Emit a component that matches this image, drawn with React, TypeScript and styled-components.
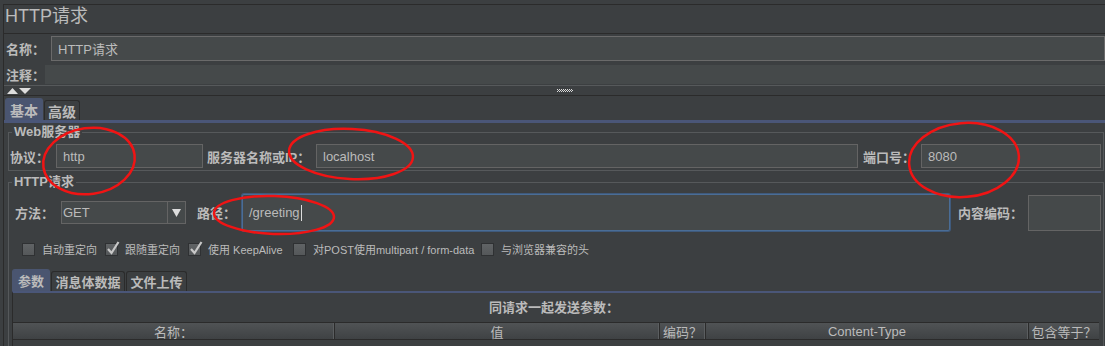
import React from "react";
import styled, { createGlobalStyle } from "styled-components";

const C = {
  bg: "#3c3f41",
  dark: "#2b2b2b",
  field: "#45494a",
  fieldBorder: "#646464",
  text: "#bbbbbb",
  tab: "#4a5570",
  blue: "#4a5678",
  focus: "#4a6d96",
  etch: "#56595b",
};

const GlobalStyle = createGlobalStyle`
  html, body { margin: 0; padding: 0; background: ${C.bg}; }
  body {
    font-family: "Liberation Sans", "Noto Sans CJK SC", sans-serif;
    color: ${C.text};
  }
  * { box-sizing: border-box; }
`;

const Root = styled.div`
  position: relative;
  width: 1105px;
  height: 346px;
  overflow: hidden;
  padding: 4px 0 0 3px;
  background: ${C.bg};
`;

const Frame = styled.div`
  border-top: 1px solid ${C.dark};
  border-left: 1px solid ${C.dark};
  height: 100%;
`;

const Title = styled.div`
  height: 28px;
  line-height: 22px;
  font-size: 18px;
  padding-left: 1px;
  white-space: nowrap;
`;

const NamePanel = styled.div`
  border-top: 1px solid ${C.dark};
  border-bottom: 1px solid ${C.etch};
  padding: 2px 0 1px 0;
  display: flex;
  flex-direction: column;
  gap: 4px;
`;

const Row = styled.div<{ $h: number }>`
  display: flex;
  align-items: center;
  height: ${(p) => p.$h}px;
`;

const Label = styled.div<{ $w: number; $pl?: number }>`
  flex: 0 0 ${(p) => p.$w}px;
  padding-left: ${(p) => p.$pl ?? 2}px;
  font-size: 13px;
  font-weight: 700;
  white-space: nowrap;
  overflow: hidden;
`;

const Field = styled.div<{ $w?: number; $h: number; $border?: string; $focus?: boolean }>`
  ${(p) => (p.$w ? `flex: 0 0 ${p.$w}px;` : "flex: 1 1 auto;")}
  height: ${(p) => p.$h}px;
  background: ${C.field};
  border: 1px solid ${(p) => (p.$focus ? C.focus : p.$border ?? C.fieldBorder)};
  ${(p) => (p.$focus ? "border-radius: 2px; box-shadow: 0 0 0 1px #3f5a7c;" : "")}
  font-size: 13px;
  padding-left: 6px;
  display: flex;
  align-items: center;
  white-space: nowrap;
  min-width: 0;
`;

const Caret = styled.span`
  display: inline-block;
  width: 1px;
  height: 16px;
  background: #dddddd;
  margin-left: 1px;
`;

const Splitter = styled.div`
  height: 10px;
  border-bottom: 1px solid ${C.dark};
  display: flex;
  align-items: center;
  padding-left: 3px;
  position: relative;
`;

const Grip = styled.svg`
  position: absolute;
  left: 553px;
  top: 3px;
`;

const TabBar = styled.div<{ $pl: number }>`
  display: flex;
  align-items: flex-end;
  height: 24px;
  padding-left: ${(p) => p.$pl}px;
`;

const Tab = styled.div<{ $active?: boolean; $w: number; $fs: number }>`
  flex: 0 0 ${(p) => p.$w}px;
  height: ${(p) => (p.$active ? 22 : 20)}px;
  background: ${(p) => (p.$active ? C.tab : C.bg)};
  border: 1px solid ${(p) => (p.$active ? C.tab : C.dark)};
  border-bottom: none;
  border-radius: 3px 3px 0 0;
  font-size: ${(p) => p.$fs}px;
  font-weight: 700;
  display: flex;
  align-items: center;
  justify-content: center;
  white-space: nowrap;
  margin-right: 1px;
`;

const TabBody = styled.div`
  border-top: 3px solid ${C.blue};
  padding-top: 2px;
`;

const Group = styled.fieldset<{ $mt: number }>`
  margin: ${(p) => p.$mt}px 1px 0 4px;
  padding: 5px 2px 2px 0;
  border: 1px solid ${C.etch};
  min-width: 0;
`;

const Legend = styled.legend`
  font-size: 13px;
  font-weight: 700;
  line-height: 14px;
  padding: 0 2px;
  margin-left: 3px;
  white-space: nowrap;
`;

const Combo = styled.div`
  flex: 0 0 125px;
  height: 23px;
  background: ${C.field};
  border: 1px solid ${C.fieldBorder};
  display: flex;
  font-size: 13px;
`;

const ComboText = styled.div`
  flex: 1;
  padding-left: 1px;
  display: flex;
  align-items: center;
`;

const ComboArrow = styled.div`
  flex: 0 0 18px;
  border-left: 1px solid ${C.fieldBorder};
  display: flex;
  align-items: center;
  justify-content: center;
`;

const Checks = styled.div`
  display: flex;
  align-items: center;
  height: 14px;
  margin-top: 11px;
  padding-left: 13px;
`;

const CheckItem = styled.div<{ $w?: number }>`
  ${(p) => (p.$w ? `flex: 0 0 ${p.$w}px;` : "")}
  display: flex;
  align-items: center;
  gap: 7px;
  font-size: 11px;
  white-space: nowrap;
`;

const Box = styled.div`
  position: relative;
  width: 13px;
  height: 13px;
  background: linear-gradient(#606365, #55585a);
  border: 1px solid #2f3133;
`;

const Tick = styled.svg`
  position: absolute;
  left: -1px;
  top: -4px;
`;

const SubTabs = styled(TabBar)`
  margin-top: 13px;
  height: 22px;
`;

const SubPanel = styled.div`
  margin: 0 0 0 3px;
  border-top: 2px solid ${C.blue};
  border-left: 1px solid ${C.dark};
  height: 60px;
`;

const PanelTitle = styled.div`
  height: 29px;
  padding-top: 8px;
  line-height: 14px;
  font-size: 13px;
  font-weight: 700;
  text-align: center;
  padding-right: 6px;
`;

const Header = styled.div`
  display: flex;
  height: 18px;
  border-top: 1px solid ${C.dark};
  border-bottom: 1px solid ${C.dark};
  background: linear-gradient(#505355, #3f4244);
  width: 1086px;
`;

const HeadCell = styled.div<{ $w: number; $last?: boolean }>`
  flex: 0 0 ${(p) => p.$w}px;
  border-right: ${(p) => (p.$last ? "none" : `1px solid ${C.dark}`)};
  box-shadow: ${(p) => (p.$last ? "none" : "inset -1px 0 0 #5b5e60")};
  font-size: 13px;
  display: flex;
  align-items: center;
  justify-content: center;
  white-space: nowrap;
`;

const Notes = styled.svg`
  position: absolute;
  left: 0;
  top: 0;
  pointer-events: none;
`;

const Check = ({ label, checked, w }: { label: string; checked?: boolean; w?: number }) => (
  <CheckItem $w={w}>
    <Box>
      {checked && (
        <Tick width="16" height="16" viewBox="0 0 16 16">
          <path d="M3 9 L6.5 13 L13.5 2" stroke="#c8c8c8" strokeWidth="2.2" fill="none" />
        </Tick>
      )}
    </Box>
    <span>{label}</span>
  </CheckItem>
);

export default function App() {
  return (
    <>
      <GlobalStyle />
      <Root>
        <Frame>
          <Title>HTTP请求</Title>
          <NamePanel>
            <Row $h={25}>
              <Label $w={47}>名称：</Label>
              <Field $h={25} $border="#6a6a6a">HTTP请求</Field>
            </Row>
            <Row $h={19}>
              <Label $w={41}>注释：</Label>
              <Field $h={19} $border={C.field} />
            </Row>
          </NamePanel>
          <Splitter>
            <svg width="26" height="6" viewBox="0 0 26 6">
              <polygon points="0,6 5.5,0 11,6" fill="#dddddd" />
              <polygon points="12,0 24,0 18,6" fill="#dddddd" />
            </svg>
            <Grip width="18" height="4" viewBox="0 0 18 4">
              {[0, 4, 8, 12].map((x) => (
                <g key={x} fill="#d8d8d8">
                  <rect x={x} y={0} width="1" height="1" />
                  <rect x={x + 2} y={0} width="1" height="1" />
                  <rect x={x + 1} y={1} width="1" height="1" />
                  <rect x={x + 3} y={1} width="1" height="1" />
                  <rect x={x} y={2} width="1" height="1" />
                  <rect x={x + 2} y={2} width="1" height="1" />
                </g>
              ))}
            </Grip>
          </Splitter>
          <TabBar $pl={1}>
            <Tab $active $w={38} $fs={14}>基本</Tab>
            <Tab $w={36} $fs={14}>高级</Tab>
          </TabBar>
          <TabBody>
            <Group $mt={0}>
              <Legend>Web服务器</Legend>
              <Row $h={24}>
                <Label $w={47} $pl={1}>协议：</Label>
                <Field $w={147} $h={24}>http</Field>
                <Label $w={113} $pl={4}>服务器名称或IP：</Label>
                <Field $h={24}>localhost</Field>
                <Label $w={63} $pl={5}>端口号：</Label>
                <Field $w={180} $h={24}>8080</Field>
              </Row>
            </Group>
            <Group $mt={4}>
              <Legend>HTTP请求</Legend>
              <Row $h={37}>
                <Label $w={52} $pl={6}>方法：</Label>
                <Combo>
                  <ComboText>GET</ComboText>
                  <ComboArrow>
                    <svg width="9" height="8" viewBox="0 0 9 8">
                      <polygon points="0,0 9,0 4.5,8" fill="#dddddd" />
                    </svg>
                  </ComboArrow>
                </Combo>
                <Label $w={56} $pl={11}>路径：</Label>
                <Field $h={37} $focus>
                  /greeting
                  <Caret />
                </Field>
                <Label $w={78} $pl={8}>内容编码：</Label>
                <Field $w={73} $h={36} />
              </Row>
              <Checks>
                <Check w={83} label="自动重定向" />
                <Check w={83} checked label="跟随重定向" />
                <Check w={105} checked label="使用 KeepAlive" />
                <Check w={188} label="对POST使用multipart / form-data" />
                <Check label="与浏览器兼容的头" />
              </Checks>
              <SubTabs $pl={3}>
                <Tab $active $w={38} $fs={13}>参数</Tab>
                <Tab $w={74} $fs={13}>消息体数据</Tab>
                <Tab $w={61} $fs={13}>文件上传</Tab>
              </SubTabs>
              <SubPanel>
                <PanelTitle>同请求一起发送参数：</PanelTitle>
                <Header>
                  <HeadCell $w={322}>名称：</HeadCell>
                  <HeadCell $w={325}>值</HeadCell>
                  <HeadCell $w={46}>编码？</HeadCell>
                  <HeadCell $w={323}>Content-Type</HeadCell>
                  <HeadCell $w={70} $last>包含等于？</HeadCell>
                </Header>
              </SubPanel>
            </Group>
          </TabBody>
        </Frame>
        <Notes width="1105" height="346" viewBox="0 0 1105 346">
          <g fill="none" stroke="#f01414" strokeWidth="2.5">
            <ellipse cx="89" cy="161" rx="46" ry="33" transform="rotate(-8 89 161)" />
            <ellipse cx="351" cy="154" rx="62" ry="25" transform="rotate(3 351 154)" />
            <ellipse cx="964" cy="160" rx="55" ry="37" transform="rotate(-5 964 160)" />
            <ellipse cx="274" cy="215" rx="60" ry="19" transform="rotate(2 274 215)" />
          </g>
        </Notes>
      </Root>
    </>
  );
}
